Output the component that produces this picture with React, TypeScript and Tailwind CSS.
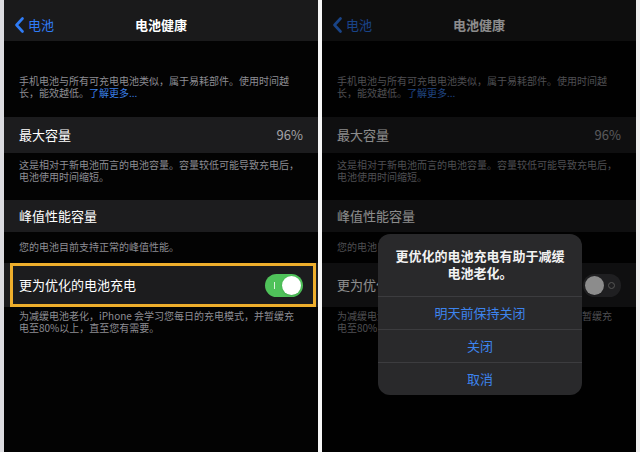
import React from "react"

const font = { fontFamily: '"PingFang SC", "Noto Sans CJK SC", "Noto Sans", sans-serif' }

function Toggle({ on }: { on: boolean }) {
  if (on) {
    return (
      <div className="relative flex h-[23px] w-[38px] items-center rounded-full bg-[#4fc25a]">
        <span className="absolute left-[9px] top-[8px] h-[7px] w-[1px] bg-white/80" />
        <span className="absolute right-[2px] top-[2px] h-[19px] w-[19px] rounded-full bg-white shadow" />
      </div>
    )
  }
  return (
    <div className="relative flex h-[23px] w-[38px] items-center rounded-full bg-[#3a3a3d]">
      <span className="absolute right-[6px] top-[8px] h-[7px] w-[7px] rounded-full border border-[#9a9a9a]" />
      <span className="absolute left-[2px] top-[2px] h-[19px] w-[19px] rounded-full bg-white shadow" />
    </div>
  )
}

function Desc({ children, className }: { children: React.ReactNode; className: string }) {
  return (
    <div className={`px-[15px] text-[10px] leading-[12px] whitespace-nowrap text-[#8d8d93] ${className}`}>
      {children}
    </div>
  )
}

function Screen({ alert }: { alert: boolean }) {
  return (
    <div className="relative h-[452px] w-[314px] overflow-hidden bg-[#030303]" style={font}>
      {/* nav bar */}
      <div className="relative flex h-[41px] items-center justify-center bg-[#1a1a1b]">
        <div className="absolute left-[10px] top-[17px] flex items-center gap-[3px] text-[#2f7cf6]">
          <svg width="11" height="16" viewBox="0 0 11 16" fill="none">
            <path d="M8.5 1.5 L2.5 8 L8.5 14.5" stroke="currentColor" strokeWidth="2.6" strokeLinecap="round" strokeLinejoin="round" />
          </svg>
          <span className="text-[13px] leading-[16px]">电池</span>
        </div>
        <span className="pt-[9px] text-[13px] font-semibold text-white">电池健康</span>
      </div>

      <Desc className="pt-[34px] pb-[18px]">
        手机电池与所有可充电电池类似，属于易耗部件。使用时间越
        <br />
        长，能效越低。<span className="text-[#3a7fe6]">了解更多...</span>
      </Desc>

      <div className="flex h-[36px] items-center justify-between bg-[#1c1c1e] px-[15px] text-[13px]">
        <span className="text-white">最大容量</span>
        <span className="text-[#a3a3a8]">96%</span>
      </div>

      <Desc className="pt-[6px] pb-[17px]">
        这是相对于新电池而言的电池容量。容量较低可能导致充电后，
        <br />
        电池使用时间缩短。
      </Desc>

      <div className="flex h-[32px] items-center bg-[#1c1c1e] px-[15px] text-[13px] text-white">峰值性能容量</div>

      <Desc className="pt-[9px] pb-[10px]">您的电池目前支持正常的峰值性能。</Desc>

      <div className="relative flex h-[44px] items-center justify-between bg-[#1c1c1e] px-[15px] text-[13px] text-white">
        <span>更为优化的电池充电</span>
        <Toggle on={!alert} />
        {!alert && (
          <div className="absolute bottom-0 left-[6px] right-[2px] top-0 border-[3px] border-[#eeae2c]" />
        )}
      </div>

      <Desc className="pt-[3px]">
        为减缓电池老化，iPhone 会学习您每日的充电模式，并暂缓充
        <br />
        电至80%以上，直至您有需要。
      </Desc>

      {alert && (
        <>
          <div className="absolute inset-0 bg-black/45" />
          <div className="absolute left-[56px] top-[234px] w-[204px] overflow-hidden rounded-[12px] bg-[#29292b]">
            <div className="px-[12px] pt-[13px] pb-[15px] text-center text-[13px] leading-[17px] font-semibold text-[#f2f2f2]">
              更优化的电池充电有助于减缓
              <br />
              电池老化。
            </div>
            <div className="flex flex-col text-[13px] text-[#3d84ee]">
              <div className="flex h-[33px] items-center justify-center border-t border-[#3c3c3f]">明天前保持关闭</div>
              <div className="flex h-[33px] items-center justify-center border-t border-[#3c3c3f]">关闭</div>
              <div className="flex h-[33px] items-center justify-center border-t border-[#3c3c3f]">取消</div>
            </div>
          </div>
        </>
      )}
    </div>
  )
}

export default function App() {
  return (
    <div className="flex h-[452px] w-[640px] bg-[#f4f4f6]">
      <div className="w-[4px] bg-[#dcdce0]" />
      <Screen alert={false} />
      <div className="w-[4px] bg-[#f6f6f6]" />
      <Screen alert={true} />
      <div className="w-[4px] bg-[#eeeeee]" />
    </div>
  )
}
